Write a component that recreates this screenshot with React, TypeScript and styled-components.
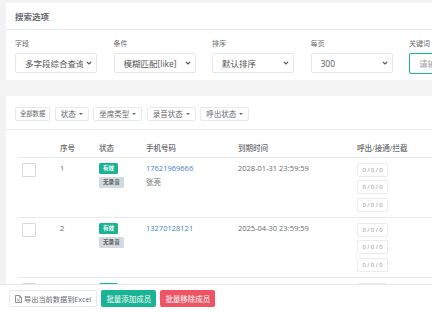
import styled, { createGlobalStyle } from 'styled-components'

const GlobalStyle = createGlobalStyle`
  html, body {
    margin: 0;
    padding: 0;
    background: #f3f3f4;
    overflow: hidden;
  }
  body {
    font-family: "Open Sans", "Noto Sans CJK SC", sans-serif;
    color: #676a6c;
  }
`

interface Member {
  id: number
  phone: string
  name?: string
  expire: string
  stats: string[]
}

const fields = [
  { label: '字段', value: '多字段综合查询' },
  { label: '条件', value: '模糊匹配[like]' },
  { label: '排序', value: '默认排序' },
  { label: '每页', value: '300' },
]

const filters = ['状态', '坐席类型', '录音状态', '呼出状态']

const members: Member[] = [
  { id: 1, phone: '17621969666', name: '张亮', expire: '2028-01-31 23:59:59', stats: ['0 / 0 / 0', '0 / 0 / 0', '0 / 0 / 0'] },
  { id: 2, phone: '13270128121', expire: '2025-04-30 23:59:59', stats: ['0 / 0 / 0', '0 / 0 / 0', '0 / 0 / 0'] },
  { id: 3, phone: '13205260163', expire: '2025-04-30 23:59:59', stats: ['0 / 0 / 0', '0 / 0 / 0', '0 / 0 / 0'] },
]

const Chevron = () => (
  <svg width="6" height="4" viewBox="0 0 6 4">
    <path d="M0.8 0.8 L3 3 L5.2 0.8" fill="none" stroke="#555" strokeWidth="1.1" />
  </svg>
)

const FileIcon = () => (
  <svg width="7" height="8" viewBox="0 0 7 8">
    <path d="M0.5 0.5 H4.5 L6.5 2.5 V7.5 H0.5 Z" fill="none" stroke="#777" strokeWidth="0.8" />
    <path d="M4.5 0.5 V2.5 H6.5" fill="none" stroke="#777" strokeWidth="0.7" />
    <path d="M2 3.8 L4.8 6.4 M4.8 3.8 L2 6.4" fill="none" stroke="#777" strokeWidth="0.7" />
  </svg>
)

export default function App() {
  return (
    <>
      <GlobalStyle />
      <Page>
        {/* 搜索选项 */}
        <Panel>
          <PanelTitle>搜索选项</PanelTitle>
          <SearchGrid>
            {fields.map(f => (
              <Field key={f.label}>
                <FieldLabel>{f.label}</FieldLabel>
                <SelectBox>
                  <SelectText>{f.value}</SelectText>
                  <Chevron />
                </SelectBox>
              </Field>
            ))}
            <Field>
              <FieldLabel>关键词</FieldLabel>
              <KeywordInput placeholder="请输入关键词" />
            </Field>
          </SearchGrid>
        </Panel>

        {/* 成员列表 */}
        <Panel $gap>
          <Toolbar>
            <SmallBtn>全部数据</SmallBtn>
            {filters.map(f => (
              <DropBtn key={f}>
                {f}
                <Caret />
              </DropBtn>
            ))}
          </Toolbar>
          <TableWrap>
            <Table>
              <thead>
                <tr>
                  <Th $w={37}></Th>
                  <Th $w={39}>序号</Th>
                  <Th $w={47}>状态</Th>
                  <Th $w={92}>手机号码</Th>
                  <Th $w={119}>到期时间</Th>
                  <Th>呼出/接通/拦截</Th>
                </tr>
              </thead>
              <tbody>
                {members.map(m => (
                  <tr key={m.id}>
                    <Td>
                      <CheckBox />
                    </Td>
                    <Td>{m.id}</Td>
                    <Td>
                      <BadgeStack>
                        <Badge $kind="ok">有效</Badge>
                        <Badge $kind="muted">无录音</Badge>
                      </BadgeStack>
                    </Td>
                    <Td>
                      <PhoneLink>{m.phone}</PhoneLink>
                      {m.name && <MemberName>{m.name}</MemberName>}
                    </Td>
                    <Td>{m.expire}</Td>
                    <Td>
                      <StatStack>
                        {m.stats.map((s, i) => (
                          <StatBox key={i}>{s}</StatBox>
                        ))}
                      </StatStack>
                    </Td>
                  </tr>
                ))}
              </tbody>
            </Table>
          </TableWrap>
        </Panel>
      </Page>

      {/* 底部操作栏 */}
      <Footer>
        <ExportBtn>
          <FileIcon />
          导出当前数据到Excel
        </ExportBtn>
        <ActionBtn $color="#1ab394">批量添加成员</ActionBtn>
        <ActionBtn $color="#ed5565">批量移除成员</ActionBtn>
      </Footer>
    </>
  )
}

// PAGE
const Page = styled.div`
  padding: 3px 0 0 6px;
  width: 620px;
`

// PANEL
const Panel = styled.div<{ $gap?: boolean }>`
  background: #fff;
  margin-top: ${p => (p.$gap ? '16px' : '0')};
`

const PanelTitle = styled.div`
  height: 26px;
  line-height: 27px;
  padding: 0 9px;
  border-bottom: 1px solid #e7eaec;
  font-size: 8.5px;
  font-weight: 600;
  color: #676a6c;
`

// SEARCH FORM
const SearchGrid = styled.div`
  display: grid;
  grid-template-columns: repeat(5, 82px);
  column-gap: 16.5px;
  padding: 9px 9px 6px;
`

const Field = styled.div`
  display: flex;
  flex-direction: column;
`

const FieldLabel = styled.div`
  font-size: 7px;
  line-height: 10px;
  margin-bottom: 4px;
  color: #676a6c;
`

const SelectBox = styled.div`
  height: 18px;
  border: 1px solid #e5e6e7;
  border-radius: 2px;
  display: flex;
  align-items: center;
  padding: 0 4px 0 9px;
  gap: 3px;
`

const SelectText = styled.div`
  flex: 1;
  overflow: hidden;
  white-space: nowrap;
  font-size: 8.5px;
  color: #555;
`

const KeywordInput = styled.input`
  box-sizing: border-box;
  width: 82px;
  height: 21px;
  margin-top: -0.5px;
  border: 1px solid #1ab394;
  border-radius: 2px;
  padding: 0 9px;
  font-family: inherit;
  font-size: 8.5px;
  outline: none;
  &::placeholder {
    color: #999;
  }
`

// TOOLBAR
const Toolbar = styled.div`
  display: flex;
  gap: 4.5px;
  padding: 11px 9px 8px;
  border-bottom: 1px solid #e7eaec;
`

const ToolBtn = styled.div`
  box-sizing: border-box;
  height: 14px;
  display: flex;
  align-items: center;
  border: 1px solid #e7eaec;
  border-radius: 2px;
  background: #fff;
  color: #676a6c;
  white-space: nowrap;
`

const SmallBtn = styled(ToolBtn)`
  padding: 0 4px;
  font-size: 6.3px;
`

const DropBtn = styled(ToolBtn)`
  padding: 0 5px;
  font-size: 7.5px;
`

const Caret = styled.span`
  margin-left: 3px;
  border-top: 2.5px solid #676a6c;
  border-left: 2px solid transparent;
  border-right: 2px solid transparent;
`

// TABLE
const TableWrap = styled.div`
  padding: 8px 0 0 12px;
`

const Table = styled.table`
  border-collapse: collapse;
  width: 560px;
  table-layout: fixed;
  font-size: 7.5px;
`

const Th = styled.th<{ $w?: number }>`
  box-sizing: border-box;
  width: ${p => (p.$w ? `${p.$w}px` : 'auto')};
  text-align: left;
  font-weight: 500;
  line-height: 10px;
  padding: 5px 5px 4px;
  border-bottom: 1px solid #e7eaec;
  color: #676a6c;
  white-space: nowrap;
`

const Td = styled.td`
  vertical-align: top;
  line-height: 11px;
  padding: 5px;
  border-bottom: 1px solid #e7eaec;
  color: #676a6c;
  white-space: nowrap;
  &:first-child {
    padding-left: 4px;
  }
`

const CheckBox = styled.div`
  width: 12px;
  height: 12px;
  border: 1px solid #d8d8d8;
  border-radius: 1px;
  background: #fff;
`

const BadgeStack = styled.div`
  display: flex;
  flex-direction: column;
  align-items: flex-start;
  gap: 3px;
`

const Badge = styled.span<{ $kind: 'ok' | 'muted' }>`
  height: 11px;
  line-height: 11px;
  padding: 0 4px;
  border-radius: 1.5px;
  font-size: 5.6px;
  font-weight: 700;
  background: ${p => (p.$kind === 'ok' ? '#1ab394' : '#d1dade')};
  color: ${p => (p.$kind === 'ok' ? '#fff' : '#5e5e5e')};
`

const PhoneLink = styled.div`
  color: #3f7fc6;
`

const MemberName = styled.div`
  margin-top: 3.5px;
  color: #676a6c;
`

const StatStack = styled.div`
  display: flex;
  flex-direction: column;
  align-items: flex-start;
  gap: 3.5px;
`

const StatBox = styled.div`
  box-sizing: border-box;
  height: 14px;
  width: 31px;
  line-height: 12px;
  text-align: center;
  border: 1px solid #ebebeb;
  border-radius: 2px;
  font-size: 5.8px;
  color: #888;
`

// FOOTER
const Footer = styled.div`
  position: fixed;
  left: 0;
  right: 0;
  bottom: 0;
  height: 22px;
  border-top: 1px solid #e7eaec;
  background: #fff;
  display: flex;
  align-items: flex-start;
  gap: 4px;
  padding: 5px 0 0 9px;
`

const FooterBtn = styled.div`
  box-sizing: border-box;
  height: 17px;
  display: flex;
  align-items: center;
  border-radius: 2px;
  white-space: nowrap;
`

const ExportBtn = styled(FooterBtn)`
  border: 1px solid #e7eaec;
  padding: 0 5px;
  gap: 2px;
  font-size: 7.2px;
  color: #676a6c;
  background: #fff;
`

const ActionBtn = styled(FooterBtn)<{ $color: string }>`
  padding: 0 5px;
  font-size: 7.5px;
  background: ${p => p.$color};
  color: #fff;
`
